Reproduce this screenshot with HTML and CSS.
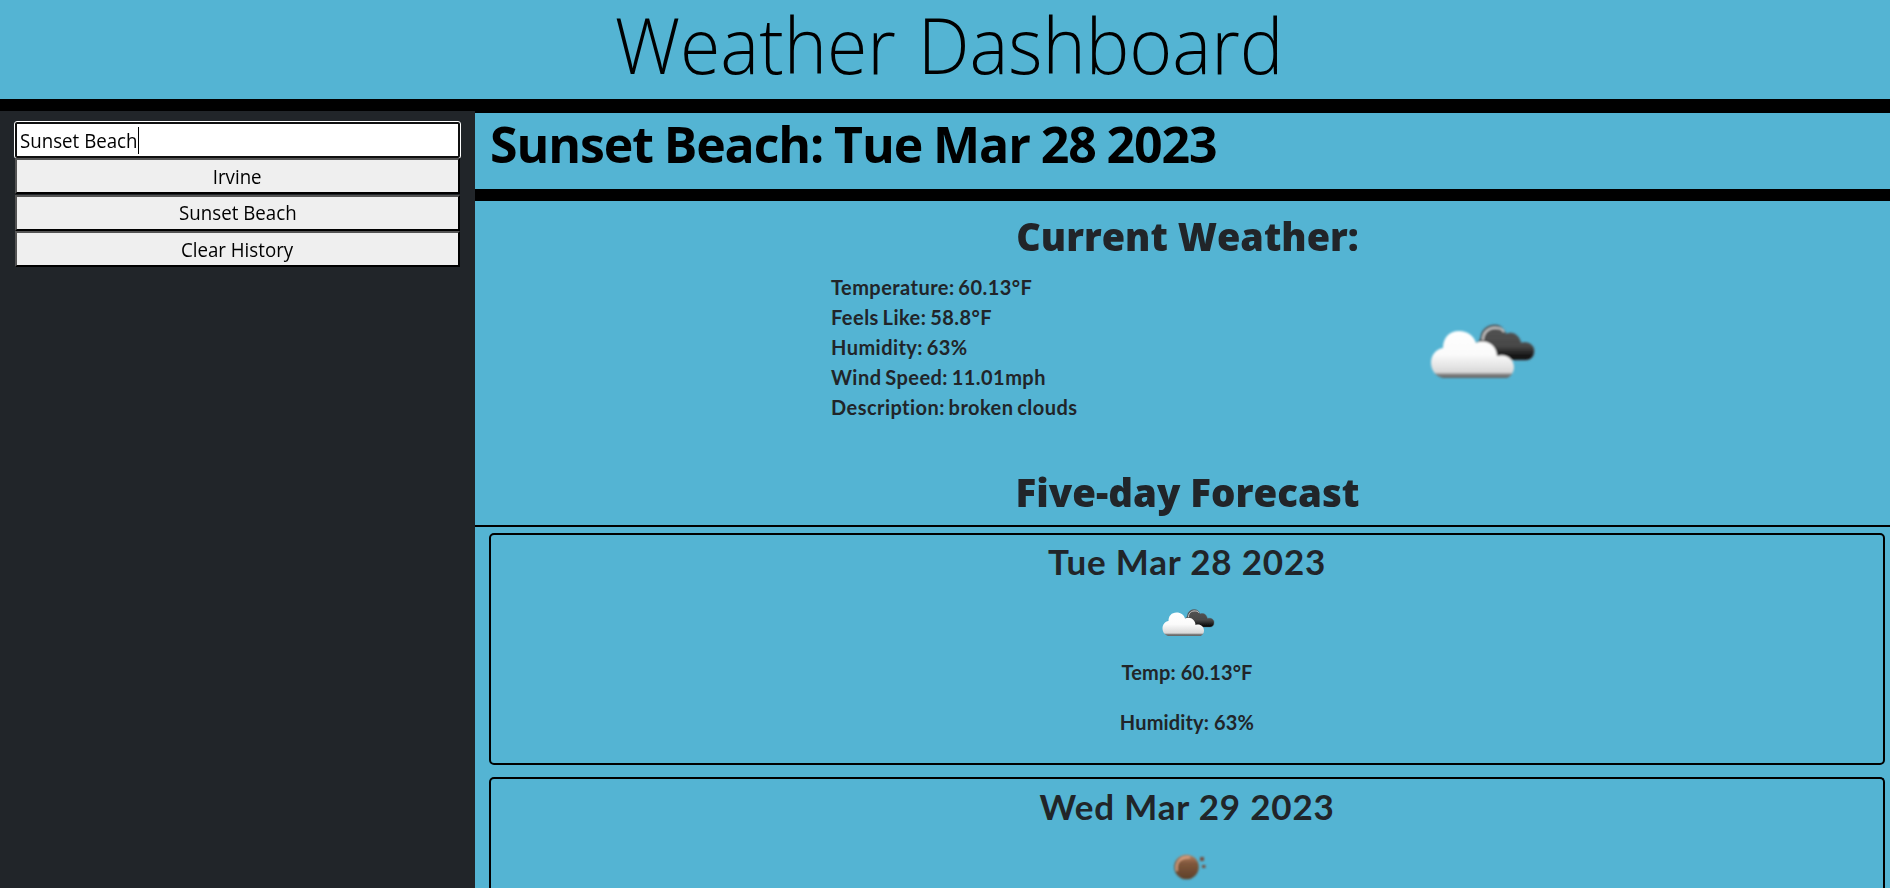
FILE: index.html
```html
<!DOCTYPE html>
<html lang="en">
<head>
<meta charset="utf-8">
<title>Weather Dashboard</title>
<link rel="stylesheet" href="styles.css">
</head>
<body>
<svg class="defs" aria-hidden="true">
  <defs>
    <linearGradient id="white" x1="0" y1="0" x2="0" y2="1"><stop offset="0" stop-color="#fff"/><stop offset=".5" stop-color="#fbfbfb"/><stop offset=".88" stop-color="#d8d8d8"/><stop offset=".92" stop-color="#858585"/><stop offset="1" stop-color="#606060"/></linearGradient>
    <linearGradient id="dark" x1="0" y1="0" x2="0" y2="1"><stop offset="0" stop-color="#555"/><stop offset=".6" stop-color="#484848"/><stop offset="1" stop-color="#000"/></linearGradient>
    <linearGradient id="moon" x1="0" y1="0" x2="0" y2="1"><stop offset="0" stop-color="#b98362"/><stop offset=".35" stop-color="#80573b"/><stop offset="1" stop-color="#5e4029"/></linearGradient>
    <filter id="soft"><feGaussianBlur stdDeviation=".8"/></filter>
    <symbol id="clouds" viewBox="0 0 160 100">
      <g filter="url(#soft)">
        <path fill="url(#dark)" stroke="#505860" stroke-width=".8" d="M76 43C79 42 81 39 81 36C82 29 88 25 95 25C100 25 104 28 106 34C113 31 119 35 121 43C128 41 135 45 134 52C134 57 130 60 126 60H95Z"/>
        <path fill="none" stroke="#c8c8c8" stroke-width="2" d="M83 40C83 32 89 27 97 28C101 28 103 30 104 32"/>
        <path fill="url(#white)" d="M43 78C36 77 31 70 31 63C31 55 36 49 43 48C43 38 49 31 59 31C68 31 74 36 76 43C87 38 97 46 97 56C106 53 114 59 114 67C114 73 110 78 106 78Z"/>
      </g>
    </symbol>
    <symbol id="clear-night" viewBox="0 0 80 50">
      <g filter="url(#soft)">
        <circle cx="39.5" cy="25" r="12.3" fill="url(#moon)"/>
        <path d="M30 29C28 20 34 14.5 43 15.5" fill="none" stroke="#e2ac8b" stroke-width="1.6"/>
        <path d="M53 15h4v4h-4zM55 23h3.5v3h-3.5z" fill="#775040"/>
      </g>
    </symbol>
  </defs>
</svg>
<header class="banner"><h1>Weather Dashboard</h1></header>
<div class="layout">
  <aside class="sidebar">
    <div class="search"><span class="label">Sunset Beach</span><i class="caret"></i></div>
    <button><span class="label">Irvine</span></button>
    <button><span class="label">Sunset Beach</span></button>
    <button><span class="label">Clear History</span></button>
  </aside>
  <main class="content">
    <div class="place"><h2>Sunset Beach: Tue Mar 28 2023</h2></div>
    <h3 class="section-title"><span>Current Weather:</span></h3>
    <div class="current">
      <ul>
        <li>Temperature: 60.13°F</li>
        <li>Feels Like: 58.8°F</li>
        <li>Humidity: 63%</li>
        <li>Wind Speed: 11.01mph</li>
        <li>Description: broken clouds</li>
      </ul>
      <svg class="icon-large"><use href="#clouds"/></svg>
    </div>
    <h3 class="section-title forecast-title"><span>Five-day Forecast</span></h3>
    <div class="forecast">
      <article class="card">
        <h4>Tue Mar 28 2023</h4>
        <svg class="icon"><use href="#clouds"/></svg>
        <p>Temp: 60.13°F</p>
        <p>Humidity: 63%</p>
      </article>
      <article class="card card-cut">
        <h4>Wed Mar 29 2023</h4>
        <svg class="icon"><use href="#clear-night"/></svg>
      </article>
    </div>
  </main>
</div>
</body>
</html>
```
FILE: styles.css
```css
* { box-sizing: border-box; margin: 0; }
body { height: 888px; overflow: hidden; background: #54b4d3; color: #212529; font-family: "Open Sans", sans-serif; }
.defs { position: absolute; width: 0; height: 0; }
.banner { height: 111px; border-bottom: 12px solid #000; text-align: center; color: #000; padding-left: 8px; }
.banner h1 { font-size: 78px; font-weight: 300; line-height: 88px; word-spacing: 3px; transform: scaleX(.94); }
.layout { display: flex; height: 777px; }
.sidebar { width: 475px; background: #212529; padding: 11px 15px 0; display: flex; flex-direction: column; }
.search { height: 36px; background: #fff; border: 2px solid #101010; border-radius: 2px; outline: 1px solid #fff; padding-left: 3px; display: flex; align-items: center; font: 20px "Open Sans", sans-serif; color: #000; }
.label { display: inline-block; transform: scaleX(.935); }
.search .label { transform-origin: left; margin-right: -8px; }
.caret { width: 1px; height: 27px; background: #000; }
button { height: 36px; margin-bottom: .7px; padding: 0; background: #efefef; border: 2px outset #000; font: 20px "Open Sans", sans-serif; color: #000; }
.content { flex: 1; border-top: 2px solid #000; }
.place { height: 88px; border-bottom: 12px solid #000; padding-left: 15px; color: #000; }
.place h2 { font-size: 50px; line-height: 63px; font-weight: 700; letter-spacing: -1.1px; word-spacing: -1px; transform: scaleX(1); transform-origin: left; }
.section-title { font-size: 39px; font-weight: 800; text-align: center; line-height: 48px; padding: 11px 0 1px 10px; }
.section-title span { display: inline-block; transform: scaleX(.97); }
.current { display: flex; padding-left: 356px; height: 195px; padding-top: 11px; }
.current ul { list-style: none; padding: 0; width: 569px; font: bold 20px/30px Lato, sans-serif; letter-spacing: .45px; word-spacing: -1.5px; }
.icon-large { width: 160px; height: 100px; margin-top: 28px; }
.forecast-title { height: 71px; border-bottom: 2px solid #000; padding-top: 12px; }
.forecast-title span { transform: scaleX(.985); }
.forecast { padding: 6px 5px 0 14px; }
.card { height: 232px; margin-bottom: 12px; border: 2px solid #000; border-radius: 5px; display: flex; flex-direction: column; align-items: center; font: bold 20px/30px Lato, sans-serif; }
.card-cut { height: 111px; margin-bottom: 0; border-bottom: 0; border-radius: 5px 5px 0 0; }
.card h4 { font-size: 35px; line-height: 42px; padding-top: 5px; letter-spacing: .8px; }
.card-cut h4 { padding-top: 6px; }
.icon { flex: none; width: 80px; height: 50px; margin: 15px 0 10px; }
.card p { margin-bottom: 20px; letter-spacing: .15px; }
```
